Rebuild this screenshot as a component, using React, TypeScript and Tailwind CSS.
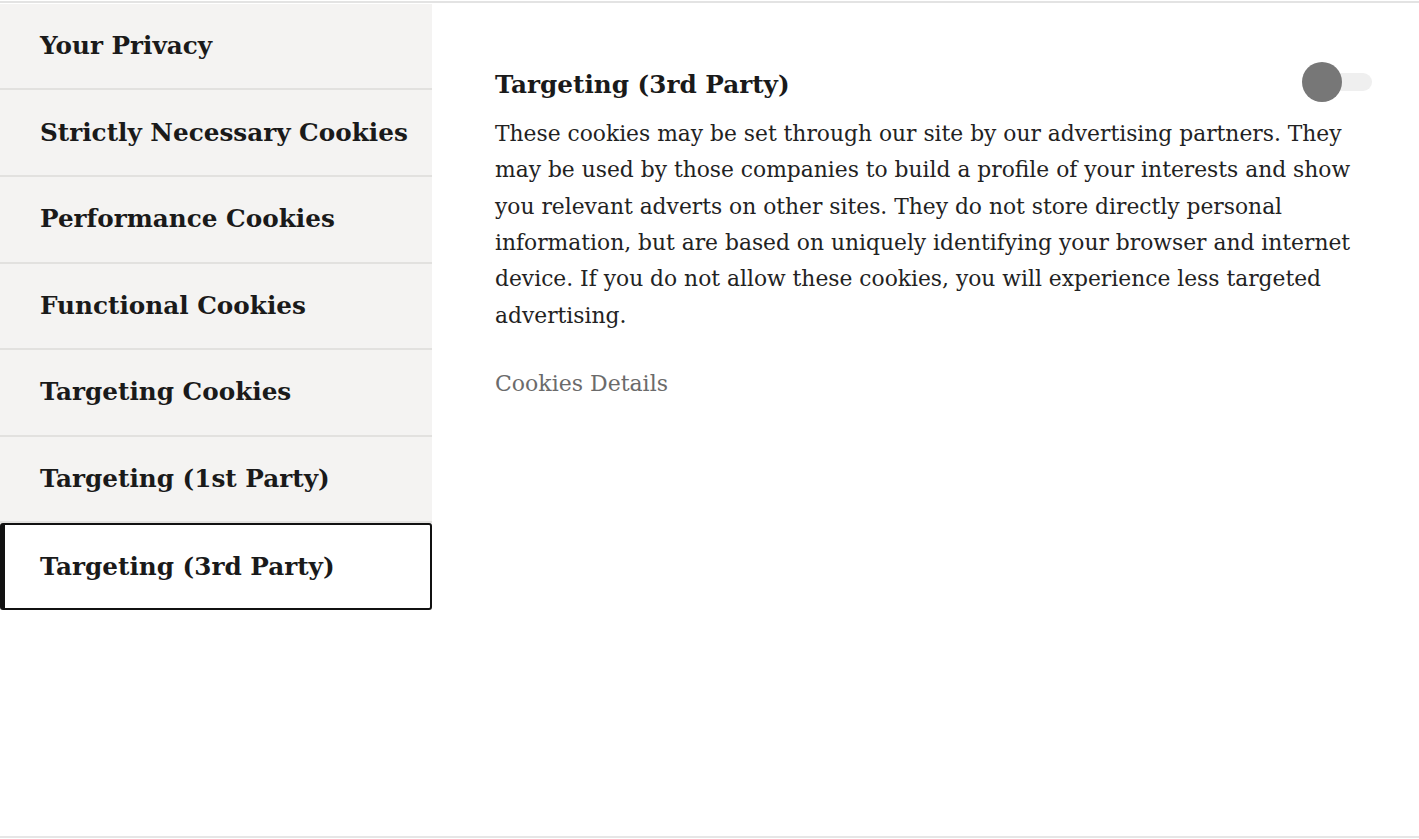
const items = [
  "Your Privacy",
  "Strictly Necessary Cookies",
  "Performance Cookies",
  "Functional Cookies",
  "Targeting Cookies",
  "Targeting (1st Party)",
  "Targeting (3rd Party)",
];

const lines = [
  "These cookies may be set through our site by our advertising partners. They",
  "may be used by those companies to build a profile of your interests and show",
  "you relevant adverts on other sites. They do not store directly personal",
  "information, but are based on uniquely identifying your browser and internet",
  "device. If you do not allow these cookies, you will experience less targeted",
  "advertising.",
];

export default function App() {
  const active = 6;
  return (
    <div
      className="w-[1419px] h-[839px] bg-white flex flex-col text-[#1a1a1a] overflow-hidden"
      style={{ fontFamily: '"DejaVu Serif", Georgia, serif' }}
    >
      <div className="h-[3px] border-t-2 border-[#e3e3e3] mt-[1px]" />
      <div className="flex flex-1">
        {/* 메뉴 */}
        <div className="w-[432px] h-[832px] bg-[#f4f3f2] flex flex-col">
          {items.map((label, i) =>
            i === active ? (
              <div
                key={label}
                className="h-[87px] flex items-center pl-[35px] bg-white border-2 border-l-[5px] border-[#111] rounded-[3px]"
              >
                <span className="font-bold text-[24.7px]">{label}</span>
              </div>
            ) : (
              <div
                key={label}
                className="h-[86.6px] flex items-center pl-[40px] pb-[1px] border-b-2 border-[#e2e1df]"
              >
                <span className="font-bold text-[24.7px]">{label}</span>
              </div>
            )
          )}
          <div className="flex-1 bg-white" />
        </div>

        {/* 내용 */}
        <div className="flex-1 pl-[63px] pt-[58px]">
          <div className="flex items-center justify-between pr-[47px]">
            <h2 className="font-bold text-[24.7px] pt-[4px]">Targeting (3rd Party)</h2>
            <div className="relative w-[70px] h-[40px] flex items-center">
              <div className="ml-[30px] w-[40px] h-[18px] rounded-full bg-[#efefef]" />
              <div className="absolute left-0 top-0 w-[40px] h-[40px] rounded-full bg-[#777777]" />
            </div>
          </div>
          <p className="mt-[13px] text-[21.8px] leading-[36.4px] text-[#222] whitespace-nowrap">
            {lines.map((l) => (
              <span key={l} className="block">
                {l}
              </span>
            ))}
          </p>
          <div className="mt-[33px] text-[22px] text-[#6b6b6b]">Cookies Details</div>
        </div>
      </div>
      <div className="h-[3px] bg-[#e6e6e6] mb-[1px]" />
    </div>
  );
}
